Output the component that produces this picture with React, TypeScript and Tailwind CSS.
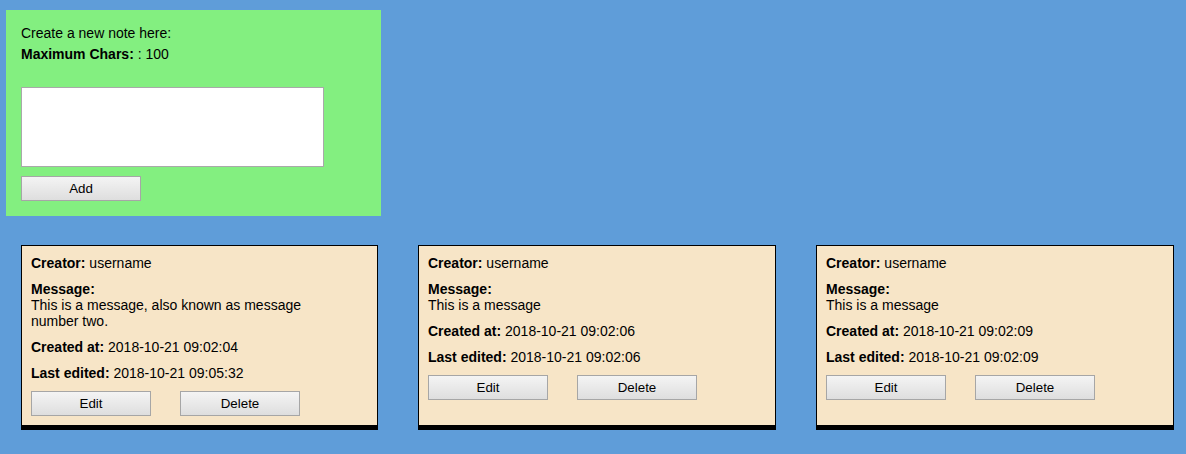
import React from "react";

const font = { fontFamily: '"Liberation Sans", Arial, sans-serif' };

function Btn({ children }: { children: React.ReactNode }) {
  return (
    <button
      className="h-[25px] w-[120px] border border-[#a6a6a6] bg-gradient-to-b from-[#f4f4f4] to-[#dedede] text-[13.33px] leading-[15px] text-black"
      style={font}
    >
      {children}
    </button>
  );
}

type Note = { message: string; created: string; edited: string; w: string };

function Card({ n }: { n: Note }) {
  return (
    <div
      className={`${n.w} shrink-0 border border-b-[5px] border-black bg-[#f7e5c7] px-[9px] pt-[9px] pb-[9px] text-[14px] leading-[16px] text-black`}
    >
      <div className="flex flex-col gap-[10px]">
        <div>
          <b>Creator:</b> username
        </div>
        <div>
          <b>Message:</b>
          <div className="max-w-[300px]">{n.message}</div>
        </div>
        <div>
          <b>Created at:</b> {n.created}
        </div>
        <div>
          <b>Last edited:</b> {n.edited}
        </div>
        <div className="flex gap-[29px]">
          <Btn>Edit</Btn>
          <Btn>Delete</Btn>
        </div>
      </div>
    </div>
  );
}

export default function App() {
  const notes: Note[] = [
    {
      message: "This is a message, also known as message number two.",
      created: "2018-10-21 09:02:04",
      edited: "2018-10-21 09:05:32",
      w: "w-[357px]",
    },
    {
      message: "This is a message",
      created: "2018-10-21 09:02:06",
      edited: "2018-10-21 09:02:06",
      w: "w-[358px]",
    },
    {
      message: "This is a message",
      created: "2018-10-21 09:02:09",
      edited: "2018-10-21 09:02:09",
      w: "w-[358px]",
    },
  ];
  return (
    <div className="h-[454px] w-full overflow-hidden bg-[#5f9dd9] pt-[10px]" style={font}>
      <div className="ml-[6px] w-[375px] bg-[#83ef80] px-[15px] pt-[15px] pb-[15px] text-[14px] leading-[16px] text-black">
        <div>Create a new note here:</div>
        <div className="mt-[5px]">
          <b>Maximum Chars:</b> : 100
        </div>
        <textarea className="mt-[25px] block h-[80px] w-[303px] resize-none border border-[#a9a9a9] bg-white" />
        <div className="mt-[9px]">
          <Btn>Add</Btn>
        </div>
      </div>
      <div className="mt-[29px] flex items-stretch gap-[40px] pl-[21px]">
        {notes.map((n, i) => (
          <Card key={i} n={n} />
        ))}
      </div>
    </div>
  );
}
